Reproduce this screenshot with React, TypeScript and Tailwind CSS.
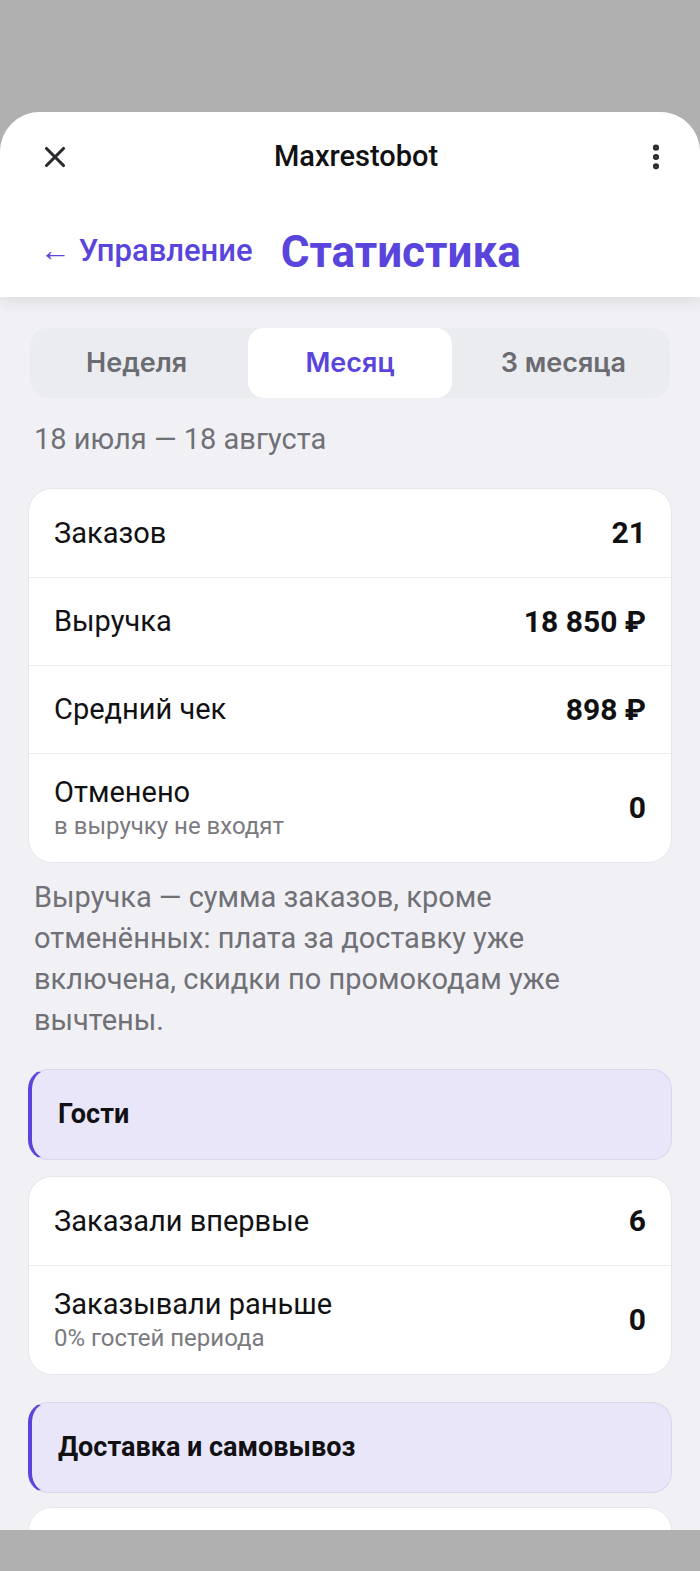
import { X, MoreVertical } from 'lucide-react';

// Mini-app sheet: "Статистика" screen of the Maxrestobot admin.

type Row = { label: string; value: string; hint?: string };

const summaryRows: Row[] = [
  { label: 'Заказов', value: '21' },
  { label: 'Выручка', value: '18 850 ₽' },
  { label: 'Средний чек', value: '898 ₽' },
  { label: 'Отменено', value: '0', hint: 'в выручку не входят' },
];

const guestRows: Row[] = [
  { label: 'Заказали впервые', value: '6' },
  { label: 'Заказывали раньше', value: '0', hint: '0% гостей периода' },
];

const tabs = ['Неделя', 'Месяц', '3 месяца'];

function StatCard({ rows }: { rows: Row[] }) {
  return (
    <div className="rounded-[24px] border border-[#e6e6ec] bg-white overflow-hidden">
      {rows.map((row, i) => (
        <div
          key={row.label}
          className={
            'flex items-center justify-between px-[25px] ' +
            (row.hint ? 'h-[109px] ' : 'h-[88px] ') +
            (i > 0 ? 'border-t border-[#ececf1]' : '')
          }
        >
          <div className="flex flex-col">
            <span className="text-[29px] leading-[36px] text-[#111114]">{row.label}</span>
            {row.hint && (
              <span className="text-[24px] leading-[32px] text-[#7a7a80]">{row.hint}</span>
            )}
          </div>
          <span className="text-[30px] font-bold text-[#111114]">{row.value}</span>
        </div>
      ))}
    </div>
  );
}

function SectionHeader({ title }: { title: string }) {
  return (
    <div className="h-[91px] flex items-center rounded-[20px] border border-[#d9d6ee] border-l-[4px] border-l-[#5a45dc] bg-[#e9e6fa] pl-[26px]">
      <span className="text-[27px] font-bold text-[#111114]">{title}</span>
    </div>
  );
}

export default function App() {
  return (
    <div
      className="h-[1571px] w-[700px] overflow-hidden bg-[#b0b0b0] flex flex-col"
      style={{ fontFamily: 'Roboto, "Noto Sans", sans-serif' }}
    >
      <div className="h-[112px] shrink-0" />

      <div className="flex-1 min-h-0 overflow-hidden rounded-t-[40px] bg-[#f1f1f5] flex flex-col">
        {/* header */}
        <div className="bg-white shadow-[0_6px_14px_rgba(0,0,0,0.08)] relative z-10">
          <div className="h-[90px] flex items-center justify-between px-[38px]">
            <X className="w-[34px] h-[34px] text-[#2a2a2e]" strokeWidth={2.2} />
            <span className="text-[29px] font-medium text-[#111114]">Maxrestobot</span>
            <MoreVertical className="w-[32px] h-[32px] text-[#2a2a2e] mr-[-10px]" strokeWidth={2.6} />
          </div>
          <div className="h-[95px] flex items-center gap-[28px] px-[40px] pt-[4px]">
            <span className="text-[31px] font-medium text-[#5a45dc]">← Управление</span>
            <span className="text-[44px] font-bold text-[#5a45dc]">Статистика</span>
          </div>
        </div>

        <div className="px-[28px] pt-[31px] flex flex-col">
          {/* period switcher */}
          <div className="mx-[2px] rounded-[18px] bg-[#ebecf0] grid grid-cols-3 h-[70px] items-stretch">
            {tabs.map(t => (
              <div
                key={t}
                className={
                  'flex items-center justify-center rounded-[16px] text-[27px] font-semibold ' +
                  (t === 'Месяц'
                    ? 'bg-white text-[#5a45dc] mx-[5px]'
                    : 'text-[#6b6b72]')
                }
                style={{ fontFamily: 'Inter, Roboto, sans-serif' }}
              >
                {t}
              </div>
            ))}
          </div>

          <div className="mt-[20px] px-[6px] text-[29px] text-[#707077]">18 июля — 18 августа</div>

          <div className="mt-[26px]">
            <StatCard rows={summaryRows} />
          </div>

          <p className="mt-[14px] px-[6px] text-[29px] leading-[41px] text-[#707077]">
            Выручка — сумма заказов, кроме отменённых: плата за доставку уже включена, скидки по
            промокодам уже вычтены.
          </p>

          <div className="mt-[28px]">
            <SectionHeader title="Гости" />
          </div>

          <div className="mt-[16px]">
            <StatCard rows={guestRows} />
          </div>

          <div className="mt-[27px]">
            <SectionHeader title="Доставка и самовывоз" />
          </div>

          <div className="mt-[14px] h-[120px] rounded-[24px] border border-[#e6e6ec] bg-white" />
        </div>
      </div>

      <div className="h-[41px] shrink-0 bg-[#b0b0b0]" />
    </div>
  );
}
